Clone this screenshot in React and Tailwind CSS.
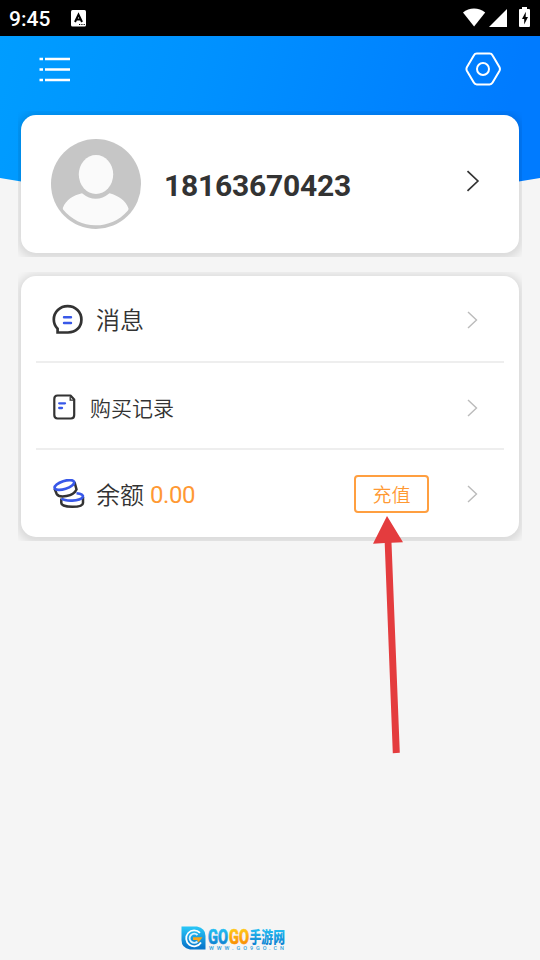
import clsx from 'clsx'

function StatusBar() {
  return (
    <div className="flex h-9 items-center bg-black pl-[9px] text-white">
      <span className="mt-[2px] w-[62px] text-[21px] leading-[36px] font-medium">9:45</span>
      <svg className="h-[17px] w-[15px]" viewBox="0 0 15 17">
        <rect width="15" height="16.5" rx="1.5" fill="#fff" />
        <path d="M4 12 L7.5 4.5 L11 12 M5.3 9.6 H9.7" fill="none" stroke="#000" strokeWidth="2" />
        <path d="M8 14.5 h1.2 M10.3 14.5 h1.2 M12.6 14.5 h1.2" stroke="#000" strokeWidth="1.2" />
      </svg>
      <svg className="ml-auto h-[36px] w-[78px]" viewBox="462 0 78 36" fill="#fff">
        <path d="M463 12.6 C469 7 479 7 485.2 12.6 L474.1 26.4 Z" />
        <path d="M489 27 L507 9 V27 Z" />
        <path d="M522 7 h5 v2 h2 q1 0 1 1 v16 q0 1 -1 1 h-9 q-1 0 -1 -1 v-16 q0 -1 1 -1 h2 Z" />
        <path d="M525.8 11.8 L522 19 h2.2 v5.4 L528 17 h-2.3 Z" fill="#000" />
      </svg>
    </div>
  )
}

function Header() {
  return (
    <header className="flex h-[165px] items-start justify-between bg-[linear-gradient(107deg,#009dff_0%,#0092ff_35%,#007bff_90%)] pt-4 pr-[38px] pl-[39px] [clip-path:circle(1600px_at_50%_-1435px)]">
      <svg className="mt-[5px] h-[25px] w-[31px]" viewBox="0 0 31 25" fill="#fff">
        <path d="M.5 .7h3.5v2.6H.5z M6 .7h25v2.6H6z M.5 11.2h3.5v2.6H.5z M6 11.2h25v2.6H6z M.5 21.7h3.5v2.6H.5z M6 21.7h25v2.6H6z" />
      </svg>
      <svg className="h-[34px] w-[37px]" viewBox="0 0 37 34" fill="none" stroke="#fff" strokeWidth="2">
        <path d="M11.8 1.6 H24.6 Q26.6 1.6 27.6 3.4 L34.4 15 Q35.5 17 34.4 19 L27.6 30.6 Q26.6 32.4 24.6 32.4 H11.8 Q9.8 32.4 8.8 30.6 L2 19 Q.9 17 2 15 L8.8 3.4 Q9.8 1.6 11.8 1.6 Z" />
        <circle cx="18" cy="17" r="6" />
      </svg>
    </header>
  )
}

// the padding is where the card's shadow gets clipped
function Card({ className, children }) {
  return (
    <section className="mx-[18px] overflow-hidden px-[3px] pt-1 pb-1">
      <div className={clsx('rounded-[15px] bg-white shadow-[0_2px_8px_4px_rgba(0,0,0,0.11)]', className)}>
        {children}
      </div>
    </section>
  )
}

function Avatar() {
  return (
    <svg className="h-[90px] w-[90px]" viewBox="0 0 90 90">
      <circle cx="45" cy="45" r="45" fill="#c6c6c6" />
      <ellipse cx="45" cy="35.5" rx="17.2" ry="19.6" fill="#fafafa" />
      <path
        d="M31 54.3 Q44.8 65.4 58.5 54.3 C68 57 75 62 77.5 69.5 Q77.5 71 76.5 72 A42 42 0 0 1 12.5 71 Q11.5 70 12 68.5 C15 61 22 56.5 31 54.3 Z"
        fill="#fafafa"
      />
    </svg>
  )
}

function Chevron({ className }) {
  return (
    <svg className={clsx('h-[18px] w-[11px]', className)} viewBox="0 0 11 18" fill="none" stroke="currentColor">
      <path d="M1 1 L9.5 9 L1 17" strokeWidth="1.4" />
    </svg>
  )
}

function MessageIcon() {
  return (
    <svg className="mt-[2px] ml-px h-[32px] w-[32px]" viewBox="0 0 32 32" fill="none">
      <path
        d="M5.6 28.5 H16 C24 28.5 29.4 23 29.4 15.7 C29.4 8 23.5 2.2 15.6 2.2 C8 2.2 1.8 8 1.8 15.6 C1.8 19.5 3.2 22.4 5.6 24.8 Z"
        stroke="#333"
        strokeWidth="2.7"
      />
      <path d="M12 13.2 H19 M12 19 H19" stroke="#3858e8" strokeWidth="2.4" strokeLinecap="round" />
    </svg>
  )
}

function RecordIcon() {
  return (
    <svg className="mt-[2px] h-[26px] w-[24px]" viewBox="0 0 24 26" fill="none">
      <path
        d="M4.5 1.5 H17.5 L21.2 5.5 V21 Q21.2 24.5 18 24.5 H4.5 Q1.3 24.5 1.3 21 V5 Q1.3 1.5 4.5 1.5 Z"
        stroke="#333"
        strokeWidth="2.2"
        strokeLinejoin="round"
      />
      <path d="M17.2 2.5 V6.2 H20.5" stroke="#333" strokeWidth="1.3" />
      <path d="M6.2 9.3 H12 M6.2 14 H9" stroke="#3858e8" strokeWidth="2.3" strokeLinecap="round" />
    </svg>
  )
}

function CoinsIcon() {
  return (
    <svg className="h-[30px] w-[32px]" viewBox="0 0 32 30" fill="none" strokeWidth="2.5">
      <path d="M8.3 19.5 V24 C8.3 26.4 13 27.8 19.3 27.8 C25.6 27.8 30 26.4 30 24 V18" stroke="#333" />
      <path d="M8.5 19.5 C12 22.3 26.5 22.6 30 18" stroke="#3858e8" strokeWidth="2.8" />
      <path d="M23.5 14.3 C28.5 14.6 30.6 16.2 30 18.3" stroke="#3858e8" />
      <path d="M1.5 9.5 L3.6 14.8 C6.5 19.8 20.5 17.2 23.5 10.5 L21.5 3" stroke="#333" />
      <ellipse cx="11.4" cy="6" rx="10.2" ry="4" transform="rotate(-18 11.4 6)" stroke="#3858e8" strokeWidth="2.7" />
    </svg>
  )
}

function Arrow() {
  return (
    <svg className="pointer-events-none absolute top-[515px] left-[370px] z-20 h-[240px] w-[40px]" viewBox="370 515 40 240">
      <path d="M387 516 L403 542.3 L391.5 542.8 L399.8 752.7 L392.8 753.2 L384.7 543 L373 543.8 Z" fill="#e43c3e" />
    </svg>
  )
}

function Watermark() {
  return (
    <footer className="mt-auto mb-[8px] ml-[181px]">
      <svg className="h-[26px] w-[106px] overflow-visible" viewBox="0 0 106 26">
        <defs>
          <linearGradient id="blue" gradientUnits="userSpaceOnUse" x1="0" y1="2" x2="0" y2="21">
            <stop offset="0" stopColor="#27c3f5" />
            <stop offset="1" stopColor="#0a78cc" />
          </linearGradient>
          <linearGradient id="orange" gradientUnits="userSpaceOnUse" x1="0" y1="3" x2="0" y2="19">
            <stop offset="0" stopColor="#ffc81a" />
            <stop offset="1" stopColor="#f98a00" />
          </linearGradient>
        </defs>
        <path d="M0.5 0.5 H16 Q24.5 2 24.5 10 V23.5 H9 Q.5 22 .5 14 Z" fill="url(#blue)" />
        <path d="M19 6.8 A8 8 0 1 0 20 16.5" fill="none" stroke="#fff" strokeWidth="1.8" />
        <path d="M16.5 9 A4.6 4.6 0 1 0 16.5 15.5" fill="none" stroke="#d8f2ff" strokeWidth="1.8" />
        <path d="M12 11.2 H21.5 L17.5 16.5 L16 14 H12 Z" fill="#f8a51b" />
        <g fontFamily="Roboto, sans-serif" fontWeight="800" fontSize="20" strokeWidth="0.7">
          <text x="27" y="18" textLength="20" lengthAdjust="spacingAndGlyphs" fill="url(#blue)" stroke="url(#blue)">GO</text>
          <text x="48" y="18" textLength="20" lengthAdjust="spacingAndGlyphs" fill="url(#orange)" stroke="url(#orange)">GO</text>
        </g>
        <text
          x="68.5"
          y="17"
          textLength="35.5"
          lengthAdjust="spacingAndGlyphs"
          fontFamily="'Noto Sans CJK SC', sans-serif"
          fontWeight="900"
          fontSize="15.5"
          fill="url(#blue)"
        >
          手游网
        </text>
        <text x="28" y="24" textLength="75" fontFamily="Roboto, sans-serif" fontWeight="500" fontSize="5.5" fill="#35a3dc">
          WWW.GO9GO.CN
        </text>
      </svg>
    </footer>
  )
}

export default function App() {
  return (
    <div className="relative flex h-[960px] w-[540px] flex-col overflow-hidden bg-[#f5f5f5] font-['Roboto','Noto_Sans_CJK_SC',sans-serif] text-[#333]">
      <StatusBar />
      <Header />
      <main className="relative z-10 -mt-[90px] flex flex-col gap-[15px]">
        <Card className="flex h-[138px] items-center pr-[39px] pl-[30px]">
          <Avatar />
          <span className="mt-[3px] ml-[23px] text-[30px] leading-none font-bold tracking-[-0.22px]">18163670423</span>
          <Chevron className="mb-[6px] ml-auto h-[22px] w-[14px] text-[#333]" />
        </Card>
        <Card className="h-[261px] px-[15px]">
          <div className="flex h-[87px] items-center border-b-2 border-[#eee] pr-[26px] pl-[15px]">
            <MessageIcon />
            <span className="mt-[5px] ml-[12px] text-[24px] font-[350]">消息</span>
            <Chevron className="mt-[2px] ml-auto text-[#bbb]" />
          </div>
          <div className="flex h-[87px] items-center border-b-2 border-[#eee] pr-[26px] pl-[17px]">
            <RecordIcon />
            <span className="mt-[8px] ml-[13px] text-[21px] font-[350]">购买记录</span>
            <Chevron className="mt-[5px] ml-auto text-[#bbb]" />
          </div>
          <div className="flex h-[87px] items-center pr-[26px] pl-[17px]">
            <CoinsIcon />
            <span className="mt-[4px] ml-[11px] text-[24px] font-[350]">余额</span>
            <span className="mt-[2px] ml-[6px] text-[24px] tracking-[-0.4px] text-[#ff9933]">0.00</span>
            <button className="ml-auto h-[38px] w-[75px] rounded-[4px] border-2 border-[#ff9f40] pt-[4px] text-[19px] leading-none font-[350] text-[#ff9933]">
              充值
            </button>
            <Chevron className="ml-[38px] text-[#bbb]" />
          </div>
        </Card>
      </main>
      <Arrow />
      <Watermark />
    </div>
  )
}
